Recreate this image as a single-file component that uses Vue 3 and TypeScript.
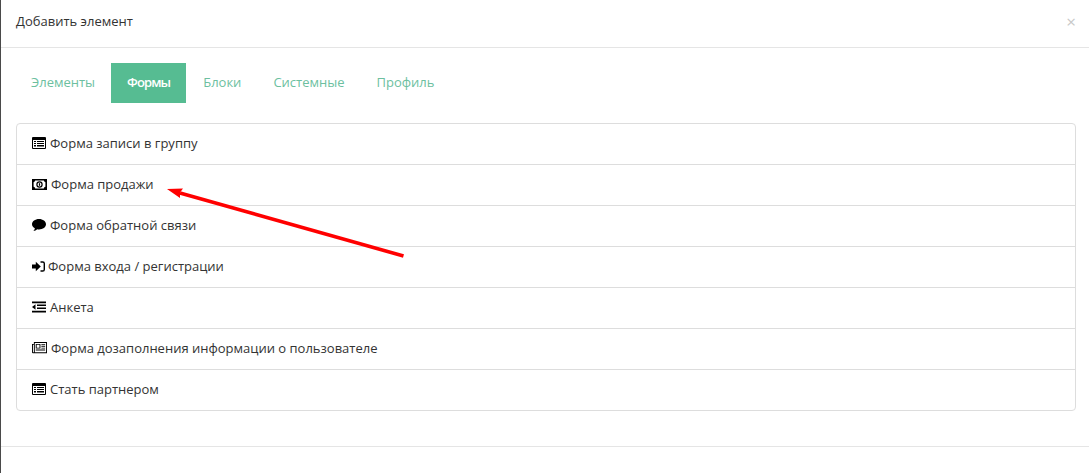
<script setup lang="ts">
const tabs: string[] = ['Элементы', 'Формы', 'Блоки', 'Системные', 'Профиль']
const rows: { icon: string; label: string }[] = [
  { icon: 'list', label: 'Форма записи в группу' },
  { icon: 'money', label: 'Форма продажи' },
  { icon: 'comment', label: 'Форма обратной связи' },
  { icon: 'signin', label: 'Форма входа / регистрации' },
  { icon: 'outdent', label: 'Анкета' },
  { icon: 'news', label: 'Форма дозаполнения информации о пользователе' },
  { icon: 'list', label: 'Стать партнером' },
]
</script>

<template>
  <div class="page">
    <section class="modal">
      <header class="head">
        <h4 class="title">Добавить элемент</h4>
        <span class="close">×</span>
      </header>
      <div class="body">
        <nav class="tabs">
          <a v-for="t in tabs" :key="t" class="tab" :class="{ active: t === 'Формы' }">{{ t }}</a>
        </nav>
        <ul class="list">
          <li v-for="r in rows" :key="r.label" class="row">
            <svg v-if="r.icon === 'list'" class="ico w14" viewBox="0 0 14 12">
              <path fill-rule="evenodd" d="M1 0h12a1 1 0 0 1 1 1v10a1 1 0 0 1-1 1H1a1 1 0 0 1-1-1V1a1 1 0 0 1 1-1zM1 3v8h12V3zM2 4h2v1H2zM5 4h7v1H5zM2 6h2v1H2zM5 6h7v1H5zM2 8h2v1.500H2zM5 8h7v1.500H5z" />
            </svg>
            <svg v-else-if="r.icon === 'money'" class="ico w15" viewBox="0 0 15 11">
              <path fill-rule="evenodd" d="M0 0h15v11H0zM3.200 1.600a1.800 1.800 0 0 1-1.600 1.600v4.600a1.800 1.800 0 0 1 1.600 1.600h8.600a1.800 1.800 0 0 1 1.600-1.600V3.200a1.800 1.800 0 0 1-1.600-1.600zM7.500 2.300a3.200 3.200 0 1 1 0 6.400 3.200 3.200 0 0 1 0-6.400zM7.500 3.500a2 2 0 1 0 0 4 2 2 0 0 0 0-4z" />
              <path d="M6.900 4.200h1.200v2.600H6.900z" />
            </svg>
            <svg v-else-if="r.icon === 'comment'" class="ico w14" viewBox="0 0 14 12">
              <path d="M7 0c3.900 0 7 2.300 7 5.200s-3.100 5.200-7 5.200c-.6 0-1.200 0-1.700-.2C4.200 11.200 2.800 11.800 1.400 12c.7-.8 1.300-1.700 1.500-2.800C1.100 8.300 0 6.900 0 5.200 0 2.300 3.100 0 7 0z" />
            </svg>
            <svg v-else-if="r.icon === 'signin'" class="ico w12" viewBox="0 0 13 11">
              <path d="M0 3.500h3.800V.8L8.800 5.500l-5 4.700V7.500H0zM8.500.3h2.200A2.300 2.300 0 0 1 13 2.600v5.800a2.300 2.300 0 0 1-2.300 2.300H8.500V9.300h2.200a.9.900 0 0 0 .9-.9V2.600a.9.900 0 0 0-.9-.9H8.500z" />
            </svg>
            <svg v-else-if="r.icon === 'outdent'" class="ico w14" viewBox="0 0 14 11">
              <path d="M0 0h14v1.800H0zM5 3h9v1.600H5zM5 6h9v1.600H5zM0 9.200h14V11H0zM3.500 2.800v5.400L0 5.500z" />
            </svg>
            <svg v-else class="ico w16" viewBox="0 0 16 12">
              <path fill-rule="evenodd" d="M2 0h14v12H1a1 1 0 0 1-1-1V2h2zM1 3v8h1V3zM3 1v10h12V1zM4 2h5v5H4zM5 3v3h3V3zM10 2h4v1h-4zM10 4h4v1h-4zM10 6h4v1h-4zM4 8h10v1H4z" />
            </svg>
            <span>{{ r.label }}</span>
          </li>
        </ul>
      </div>
      <footer class="foot"></footer>
    </section>
    <svg class="arrow" width="260" height="90" viewBox="0 0 260 90">
      <line x1="243.500" y1="76" x2="20" y2="13" stroke="#ff0000" stroke-width="3.600" />
      <polygon points="7,9 23,8.500 20,12.500 20,18" fill="#ff0000" />
    </svg>
  </div>
</template>

<style>
html, body { margin: 0; background: #fff; }
</style>

<style scoped>
.page {
  position: relative;
  width: 1089px;
  height: 475px;
  overflow: hidden;
  font-family: "Open Sans", "Noto Sans", sans-serif;
  color: #333;
  font-size: 13px;
}
.modal {
  box-sizing: border-box;
  height: 473px;
  border-left: 1px solid #4a4a4a;
  display: flex;
  flex-direction: column;
}
.head {
  box-sizing: border-box;
  border-bottom: 1px solid #e5e5e5;
  padding: 0 15px;
  display: flex;
  align-items: center;
  justify-content: space-between;
  height: 48px;
}
.title {
  margin: 0 0 5px;
  font-size: 13px;
  font-weight: 400;
  color: #333;
}
.close {
  color: #c8c8c8;
  font-size: 17px;
  margin: 0 -2px 5px 0;
}
.body {
  padding: 15px 13px 0 14px;
  flex: 1;
}
.tabs {
  display: flex;
  height: 40px;
  margin-bottom: 20px;
}
.tab {
  padding: 0 16px;
  line-height: 38px;
  color: #6dbf9f;
}
.tab.active {
  background: #56bc92;
  color: #fff;
  font-weight: 600;
  letter-spacing: -0.9px;
  margin-right: 1px;
}
.list {
  list-style: none;
  margin: 0 0 0 1px;
  padding: 0;
  border: 1px solid #ddd;
  border-radius: 4px;
}
.row {
  height: 41px;
  box-sizing: border-box;
  padding: 0 15px 2px;
  display: flex;
  align-items: center;
  gap: 4px;
  border-bottom: 1px solid #ddd;
}
.row:last-child {
  border-bottom: 0;
  height: 40px;
}
.ico { fill: #000; flex: none; }
.w12 { width: 13px; height: 11px; margin-right: -1px; }
.w14 { width: 14px; height: 12px; }
.w15 { width: 15px; height: 11px; }
.w16 { width: 15px; height: 11.250px; }
.foot {
  border-top: 1px solid #e5e5e5;
  height: 26px;
}
.arrow {
  position: absolute;
  left: 160px;
  top: 180px;
}
</style>
